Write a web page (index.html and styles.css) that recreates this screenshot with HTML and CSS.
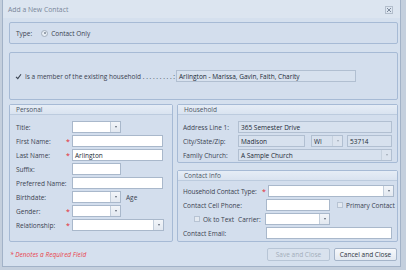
FILE: index.html
```html
<!DOCTYPE html>
<html lang="en">
<head>
  <meta charset="UTF-8">
  <title>Add a New Contact</title>
  <link rel="stylesheet" href="styles.css">
</head>
<body>
  <div class="window">
    <div class="titlebar">
      <span>Add a New Contact</span>
      <svg class="close" width="8" height="8" viewBox="0 0 8 8">
        <rect x="0.5" y="0.5" width="7" height="7" fill="none" stroke="#8a97a8" stroke-width="1" stroke-dasharray="1 1"/>
        <path d="M2 2 L6 6 M6 2 L2 6" stroke="#7d8a9c" stroke-width="1"/>
      </svg>
    </div>

    <div class="content">
      <div class="box type-box">
        <span class="type-label">Type:</span>
        <span class="radio"><span class="dot"></span></span>
        <span>Contact Only</span>
      </div>

      <div class="box member-box">
        <svg class="tick" width="7" height="7" viewBox="0 0 7 7">
          <path d="M1 3.8 L2.8 5.6 L6 1.2" fill="none" stroke="#3d4654" stroke-width="1.1"/>
        </svg>
        <span class="member-text">Is a member of the existing household . . . . . . . . . :</span>
        <div class="field readonly household-name">Arlington - Marissa, Gavin, Faith, Charity</div>
      </div>

      <div class="panels">
        <div class="panel personal">
          <div class="panel-head">Personal</div>
          <div class="rows">
            <div class="row">
              <label>Title:</label><span class="star"></span>
              <div class="field select w49"><span class="val"></span><span class="drop"></span></div>
            </div>
            <div class="row">
              <label>First Name:</label><span class="star">*</span>
              <div class="field w91"></div>
            </div>
            <div class="row">
              <label>Last Name:</label><span class="star">*</span>
              <div class="field w91">Arlington</div>
            </div>
            <div class="row">
              <label>Suffix:</label><span class="star"></span>
              <div class="field w49"></div>
            </div>
            <div class="row">
              <label>Preferred Name:</label><span class="star"></span>
              <div class="field w91"></div>
            </div>
            <div class="row">
              <label>Birthdate:</label><span class="star"></span>
              <div class="field select w49"><span class="val"></span><span class="drop"></span></div>
              <span class="age">Age</span>
            </div>
            <div class="row">
              <label>Gender:</label><span class="star">*</span>
              <div class="field select w49"><span class="val"></span><span class="drop"></span></div>
            </div>
            <div class="row">
              <label>Relationship:</label><span class="star">*</span>
              <div class="field select w92"><span class="val"></span><span class="drop"></span></div>
            </div>
          </div>
        </div>

        <div class="side">
          <div class="panel household">
            <div class="panel-head">Household</div>
            <div class="rows">
              <div class="row">
                <label>Address Line 1:</label>
                <div class="field readonly w154">365 Semester Drive</div>
              </div>
              <div class="row">
                <label>City/State/Zip:</label>
                <div class="field readonly w67">Madison</div>
                <div class="field readonly select w32 state"><span class="val">WI</span><span class="drop"></span></div>
                <div class="field readonly w45 zip">53714</div>
              </div>
              <div class="row">
                <label>Family Church:</label>
                <div class="field readonly select w154"><span class="val">A Sample Church</span><span class="drop"></span></div>
              </div>
            </div>
          </div>

          <div class="panel contact">
            <div class="panel-head">Contact Info</div>
            <div class="rows">
              <div class="row">
                <label class="hct">Household Contact Type:</label><span class="star">*</span>
                <div class="field select w126"><span class="val"></span><span class="drop"></span></div>
              </div>
              <div class="row">
                <label>Contact Cell Phone:</label>
                <div class="field w64"></div>
                <span class="checkbox primary"></span><span>Primary Contact</span>
              </div>
              <div class="row">
                <span class="checkbox text-ok"></span><span class="ok-text">Ok to Text</span>
                <span class="carrier">Carrier:</span>
                <div class="field select w65"><span class="val"></span><span class="drop"></span></div>
              </div>
              <div class="row">
                <label>Contact Email:</label>
                <div class="field w126"></div>
              </div>
            </div>
          </div>
        </div>
      </div>

      <div class="footer">
        <span class="required">* Denotes a Required Field</span>
        <div class="buttons">
          <button class="btn" disabled>Save and Close</button>
          <button class="btn">Cancel and Close</button>
        </div>
      </div>
    </div>
  </div>
</body>
</html>
```

FILE: styles.css
```css
body {
  margin: 0;
  background-color: #c4cfdd;
  font-family: "Open Sans", "Liberation Sans", sans-serif;
  font-size: 6.5px;
  color: #3a4250;
}

.window {
  width: 397px;
  height: 266px;
  margin-left: 2px;
  border: 1px solid #a2b2c7;
  border-top: none;
  background-color: #d5e0ee;
}

.titlebar {
  height: 18px;
  display: flex;
  align-items: center;
  justify-content: space-between;
  padding: 0 7px 0 5px;
  background-color: #dce5f0;
  color: #7a8699;
  font-size: 6.8px;
}

.close {
  margin-top: 2px;
}

.content {
  padding: 0 2px 0 6px;
}

.box {
  border: 1px solid #a6bad5;
  border-radius: 2px;
  background-color: #d3deed;
  display: flex;
  align-items: center;
  box-sizing: border-box;
}

.type-box {
  margin-top: 4px;
  height: 22px;
  padding-left: 6px;
}

.type-label {
  margin-right: 9px;
}

.radio {
  width: 5px;
  height: 5px;
  border: 1px solid #a4afbd;
  border-radius: 50%;
  background-color: #e7edf4;
  display: flex;
  align-items: center;
  justify-content: center;
  margin-right: 3px;
}

.radio .dot {
  width: 2px;
  height: 2px;
  border-radius: 50%;
  background-color: #7d8796;
}

.member-box {
  margin-top: 8px;
  height: 48px;
  padding-left: 5px;
}

.tick {
  margin-right: 3px;
}

.member-text {
  width: 151px;
  white-space: nowrap;
}

.household-name {
  width: 180px;
}

.panels {
  margin-top: 4px;
  display: flex;
  gap: 4px;
}

.panel {
  border: 1px solid #a6bad5;
  border-radius: 2px;
  background-color: #d3deed;
  box-sizing: border-box;
}

.panel-head {
  height: 9px;
  line-height: 9px;
  padding-left: 6px;
  background: linear-gradient(#e6edf6, #d9e3f0);
  border-bottom: 1px solid #bccbde;
  color: #4b5666;
}

.personal {
  width: 164px;
  height: 138px;
}

.personal .rows {
  padding: 5px 0 0 6px;
}

.side {
  width: 221px;
  display: flex;
  flex-direction: column;
}

.household {
  height: 59px;
}

.household .rows {
  padding: 5px 0 0 5px;
}

.contact {
  margin-top: 7px;
  height: 72px;
}

.contact .rows {
  padding: 3px 0 0 5px;
}

.row {
  height: 14px;
  display: flex;
  align-items: center;
  white-space: nowrap;
}

.row label {
  width: 50px;
  flex: none;
}

.household .row label {
  width: 55px;
}

.contact .row label {
  width: 83px;
}

.contact .row label.hct {
  width: 79px;
  letter-spacing: -0.1px;
}

.star {
  width: 6px;
  flex: none;
  color: #e3262c;
  font-size: 7px;
}

.field {
  height: 12px;
  flex: none;
  box-sizing: border-box;
  border: 1px solid #a9b8cb;
  background-color: #fff;
  display: flex;
  align-items: center;
  padding-left: 2px;
  color: #222a35;
  white-space: nowrap;
  overflow: hidden;
}

.field.readonly {
  background-color: #d7e1ee;
  border-color: #b1bfd1;
}

.field.select {
  padding-left: 0;
}

.select .val {
  flex: 1;
  padding-left: 2px;
}

.select .drop {
  width: 9px;
  height: 100%;
  border-left: 1px solid #c3cedb;
  background: linear-gradient(#f2f5f9, #e2e8f0);
  display: flex;
  align-items: center;
  justify-content: center;
}

.select .drop::after {
  content: "";
  border-left: 1.5px solid transparent;
  border-right: 1.5px solid transparent;
  border-top: 2px solid #5d6673;
}

.readonly.select .drop {
  background: #dbe3ee;
  border-left-color: #c6d1de;
}

.readonly.select .drop::after {
  border-top-color: #a0a9b5;
}

.w32 { width: 32px; }
.w45 { width: 45px; }
.w49 { width: 49px; }
.w64 { width: 64px; }
.w65 { width: 65px; }
.w67 { width: 67px; }
.w91 { width: 91px; }
.w92 { width: 92px; }
.w126 { width: 126px; }
.w154 { width: 154px; }

.state {
  margin-left: 6px;
}

.zip {
  margin-left: 4px;
}

.age {
  margin-left: 5px;
}

.checkbox {
  width: 4px;
  height: 4px;
  flex: none;
  border: 1px solid #b7c3d3;
  background-color: #e3e9f1;
  margin-right: 3px;
}

.primary {
  margin-left: 7px;
}

.text-ok {
  margin-left: 11px;
}

.carrier {
  width: 27px;
  margin-left: 4px;
}

.footer {
  height: 24px;
  display: flex;
  justify-content: space-between;
  align-items: center;
  padding-right: 1px;
}

.required {
  color: #e8434a;
  font-style: italic;
  padding-left: 1px;
}

.buttons {
  display: flex;
  gap: 4px;
}

.btn {
  height: 13px;
  width: 63px;
  padding: 0;
  border: 1px solid #a4b4c9;
  border-radius: 2px;
  background: linear-gradient(#f6f8fb, #e3e9f1);
  font-family: inherit;
  font-size: 6.5px;
  color: #2e3540;
}

.btn:disabled {
  background: #d9e2ee;
  border-color: #b7c5d6;
  color: #a3adba;
}
```
